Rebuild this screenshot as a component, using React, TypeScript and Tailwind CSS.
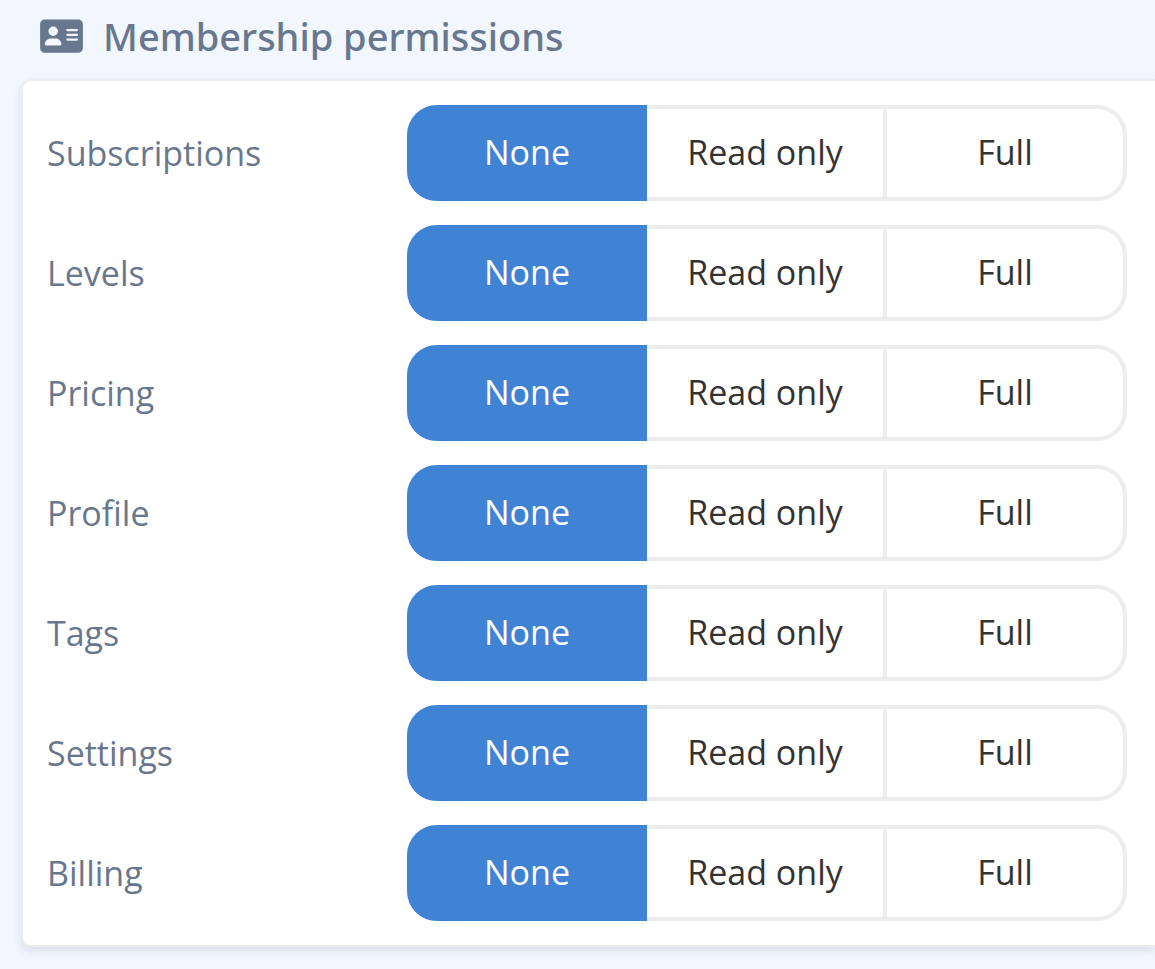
import { useState } from "react";
import { FaAddressCard } from "react-icons/fa6";

const AREAS = ["Subscriptions", "Levels", "Pricing", "Profile", "Tags", "Settings", "Billing"];
const LEVELS = ["None", "Read only", "Full"];

function PermissionRow({ area }: { area: string }) {
  const [level, setLevel] = useState("None");
  const titleId = `${area.toLowerCase()}-title`;

  return (
    <div role="radiogroup" aria-labelledby={titleId} className="grid grid-cols-3 items-center">
      <span id={titleId} className="text-[34px] leading-[48px] text-[#68778d]">
        {area}
      </span>
      <div className="col-span-2 grid h-24 grid-cols-3">
        {LEVELS.map((name) => (
          <label
            key={name}
            className="flex cursor-pointer items-center justify-center border-y-4 border-r-4 border-[#ededed] pb-0.5 text-[34px] leading-[48px] text-[#333333] first:rounded-l-[30px] first:border-l-4 last:rounded-r-[30px] has-checked:border-[#4083d5] has-checked:bg-[#4083d5] has-checked:text-white has-focus-visible:outline-2"
          >
            <input
              type="radio"
              name={area}
              value={name}
              checked={level === name}
              onChange={() => setLevel(name)}
              className="sr-only"
            />
            {name}
          </label>
        ))}
      </div>
    </div>
  );
}

export default function App() {
  return (
    <main className="min-h-screen overflow-hidden bg-[#f1f6ff] pb-6 pl-[21px] font-['Open_Sans',sans-serif]">
      <h2 className="flex h-[79px] items-center gap-5 pb-[7px] pl-[19px] font-['Noto_Sans',sans-serif] text-[38px] leading-[52px] font-medium text-[#68778d]">
        <FaAddressCard aria-hidden="true" className="h-[38px] w-[43px]" />
        Membership permissions
      </h2>
      <section className="flex flex-col gap-6 rounded-l-[10px] border-2 border-r-0 border-[#ededed] bg-white py-6 pr-7 pl-6 shadow-[0_4px_8px_rgba(50,60,90,0.12)]">
        {AREAS.map((area) => (
          <PermissionRow key={area} area={area} />
        ))}
      </section>
    </main>
  );
}
